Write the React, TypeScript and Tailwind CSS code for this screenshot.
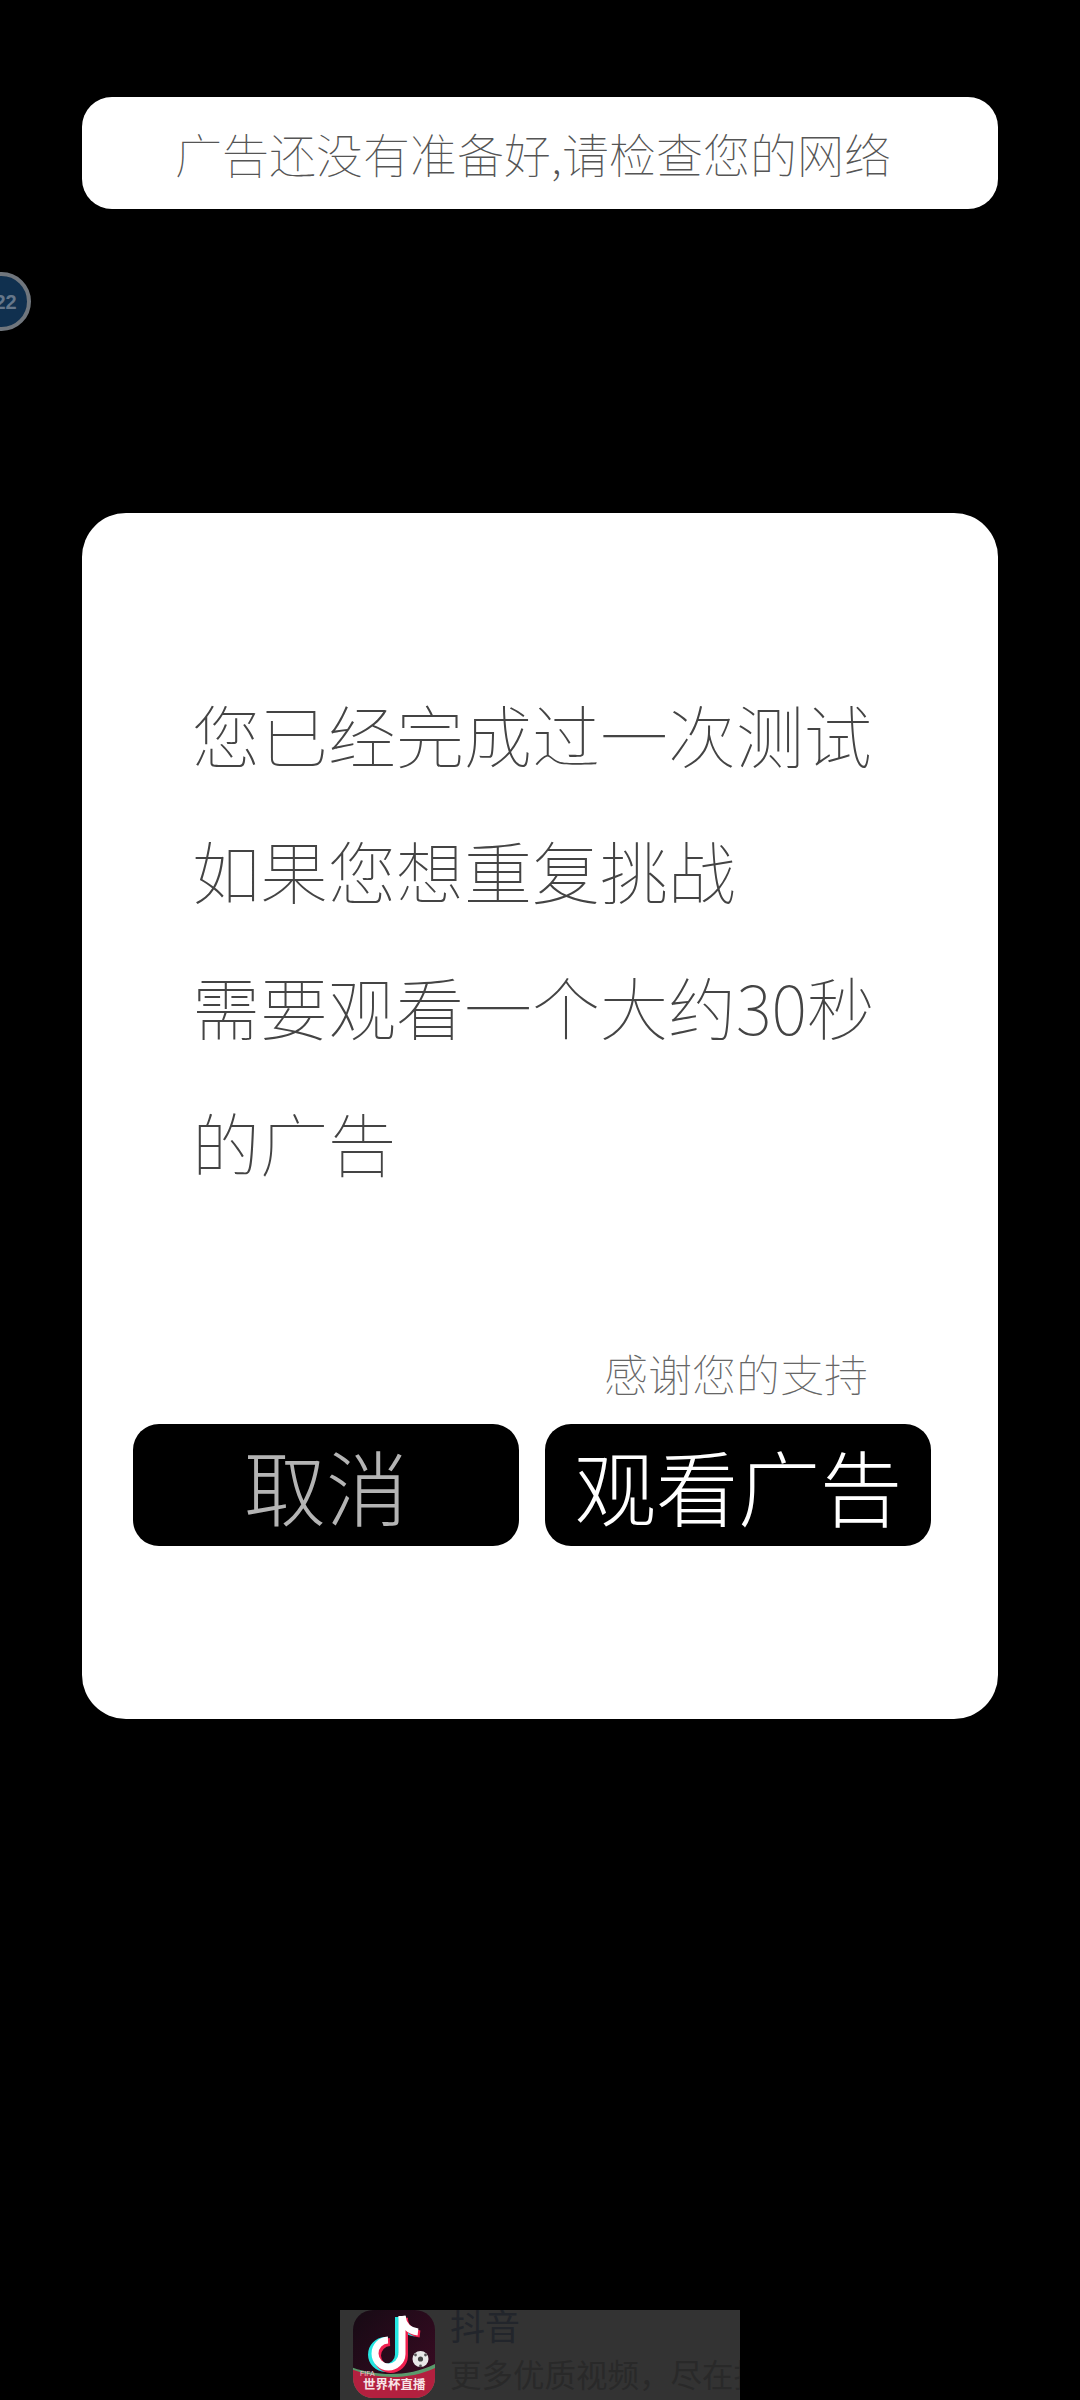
import React from 'react';

const cjk = { fontFamily: '"Noto Sans CJK SC", "Noto Sans", sans-serif' };

const stem = 'M49 6 V44 A13.5 13.5 0 1 1 35 30';
const flag = 'M49 6 C50 15 56 21 65 22';

const AppIcon = () => (
  <svg width="82" height="88" viewBox="0 0 82 88" className="shrink-0">
    <defs>
      <clipPath id="iconClip">
        <rect x="0" y="0" width="82" height="88" rx="20" />
      </clipPath>
      <linearGradient id="iconBg" x1="0" y1="0" x2="1" y2="1">
        <stop offset="0" stopColor="#160a14" />
        <stop offset="1" stopColor="#3d0b24" />
      </linearGradient>
    </defs>
    <g clipPath="url(#iconClip)">
      <rect width="82" height="88" fill="url(#iconBg)" />
      <path d="M-2 57 C 22 66, 56 68, 84 53 L84 90 L-2 90 Z" fill="#5a9a6c" />
      <path d="M-2 59 C 22 69, 56 71, 84 57 L84 90 L-2 90 Z" fill="#b3203f" />
      <g fill="none" strokeLinecap="butt">
        <path d={stem} stroke="#25e6e2" strokeWidth="8" transform="translate(-3 1)" />
        <path d={flag} stroke="#25e6e2" strokeWidth="7" transform="translate(-3 1)" />
        <path d={stem} stroke="#f0204f" strokeWidth="8" transform="translate(2 2)" />
        <path d={flag} stroke="#f0204f" strokeWidth="7" transform="translate(2 2)" />
        <path d={stem} stroke="#ffffff" strokeWidth="7" />
        <path d={flag} stroke="#ffffff" strokeWidth="7" />
      </g>
      <circle cx="67.5" cy="49" r="8" fill="#e8e8e8" />
      <circle cx="67.5" cy="49" r="2.6" fill="#444" />
      <circle cx="62.5" cy="45" r="1.4" fill="#555" />
      <circle cx="72.5" cy="45" r="1.4" fill="#555" />
      <circle cx="67.5" cy="56" r="1.4" fill="#555" />
      <text x="7" y="66" fontSize="7" fill="#f3c9d0" fontFamily="Liberation Sans, sans-serif">FIFA</text>
      <text x="10" y="79" fontSize="12.5" fontWeight="700" fill="#f7e3e6" fontFamily="Noto Sans CJK SC, sans-serif">世界杯直播</text>
    </g>
  </svg>
);

export default function App() {
  return (
    <div className="relative w-[1080px] h-[2400px] bg-black overflow-hidden flex flex-col" style={cjk}>
      {/* floating badge, mostly off the left edge */}
      <div className="absolute left-[-28px] top-[272px] w-[59px] h-[59px] rounded-full border-[4px] border-[#70767d] bg-[#10304f] flex items-center justify-center">
        <span className="text-[20px] font-bold text-[#66778a] pl-[8px]" style={{ fontFamily: '"Liberation Sans", sans-serif' }}>22</span>
      </div>

      <div className="mx-[82px] mt-[97px] h-[112px] bg-white rounded-[30px] flex items-center justify-center pr-[14px]">
        <span className="text-[47px] font-thin text-[#555555] leading-none whitespace-nowrap -mt-[2px]">广告还没有准备好,请检查您的网络</span>
      </div>

      <div className="mx-[82px] mt-[304px] h-[1206px] bg-white rounded-[44px] flex flex-col pl-[51px] pr-[67px]">
        <div className="pl-[62px] pt-[153px] -ml-[3px] text-[68px] font-thin leading-[136px] text-[#444444] whitespace-nowrap">
          <div>您已经完成过一次测试</div>
          <div>如果您想重复挑战</div>
          <div>需要观看一个大约30秒</div>
          <div>的广告</div>
        </div>
        <div className="mt-[133px] pr-[63px] text-right text-[44px] font-thin leading-[60px] text-[#666666]">感谢您的支持</div>
        <div className="mt-[21px] flex gap-[26px]">
          <button className="flex-1 h-[122px] rounded-[26px] bg-black text-[82px] font-light leading-none text-[#b4b4b4]">取消</button>
          <button className="flex-1 h-[122px] rounded-[26px] bg-black text-[82px] font-light leading-none text-white">观看广告</button>
        </div>
      </div>

      <div className="mt-auto ml-[340px] w-[400px] h-[90px] bg-[#333333] flex overflow-hidden pl-[13px]">
        <AppIcon />
        <div className="ml-[15px] -mt-[3px] min-w-0 flex flex-col whitespace-nowrap">
          <div className="text-[35px] leading-[36px] text-[#22252b]">抖音</div>
          <div className="mt-[10px] text-[31.5px] leading-[40px] text-[#292929]">{'更多优质视频\uFF0C尽在抖音'}</div>
        </div>
      </div>
    </div>
  );
}
